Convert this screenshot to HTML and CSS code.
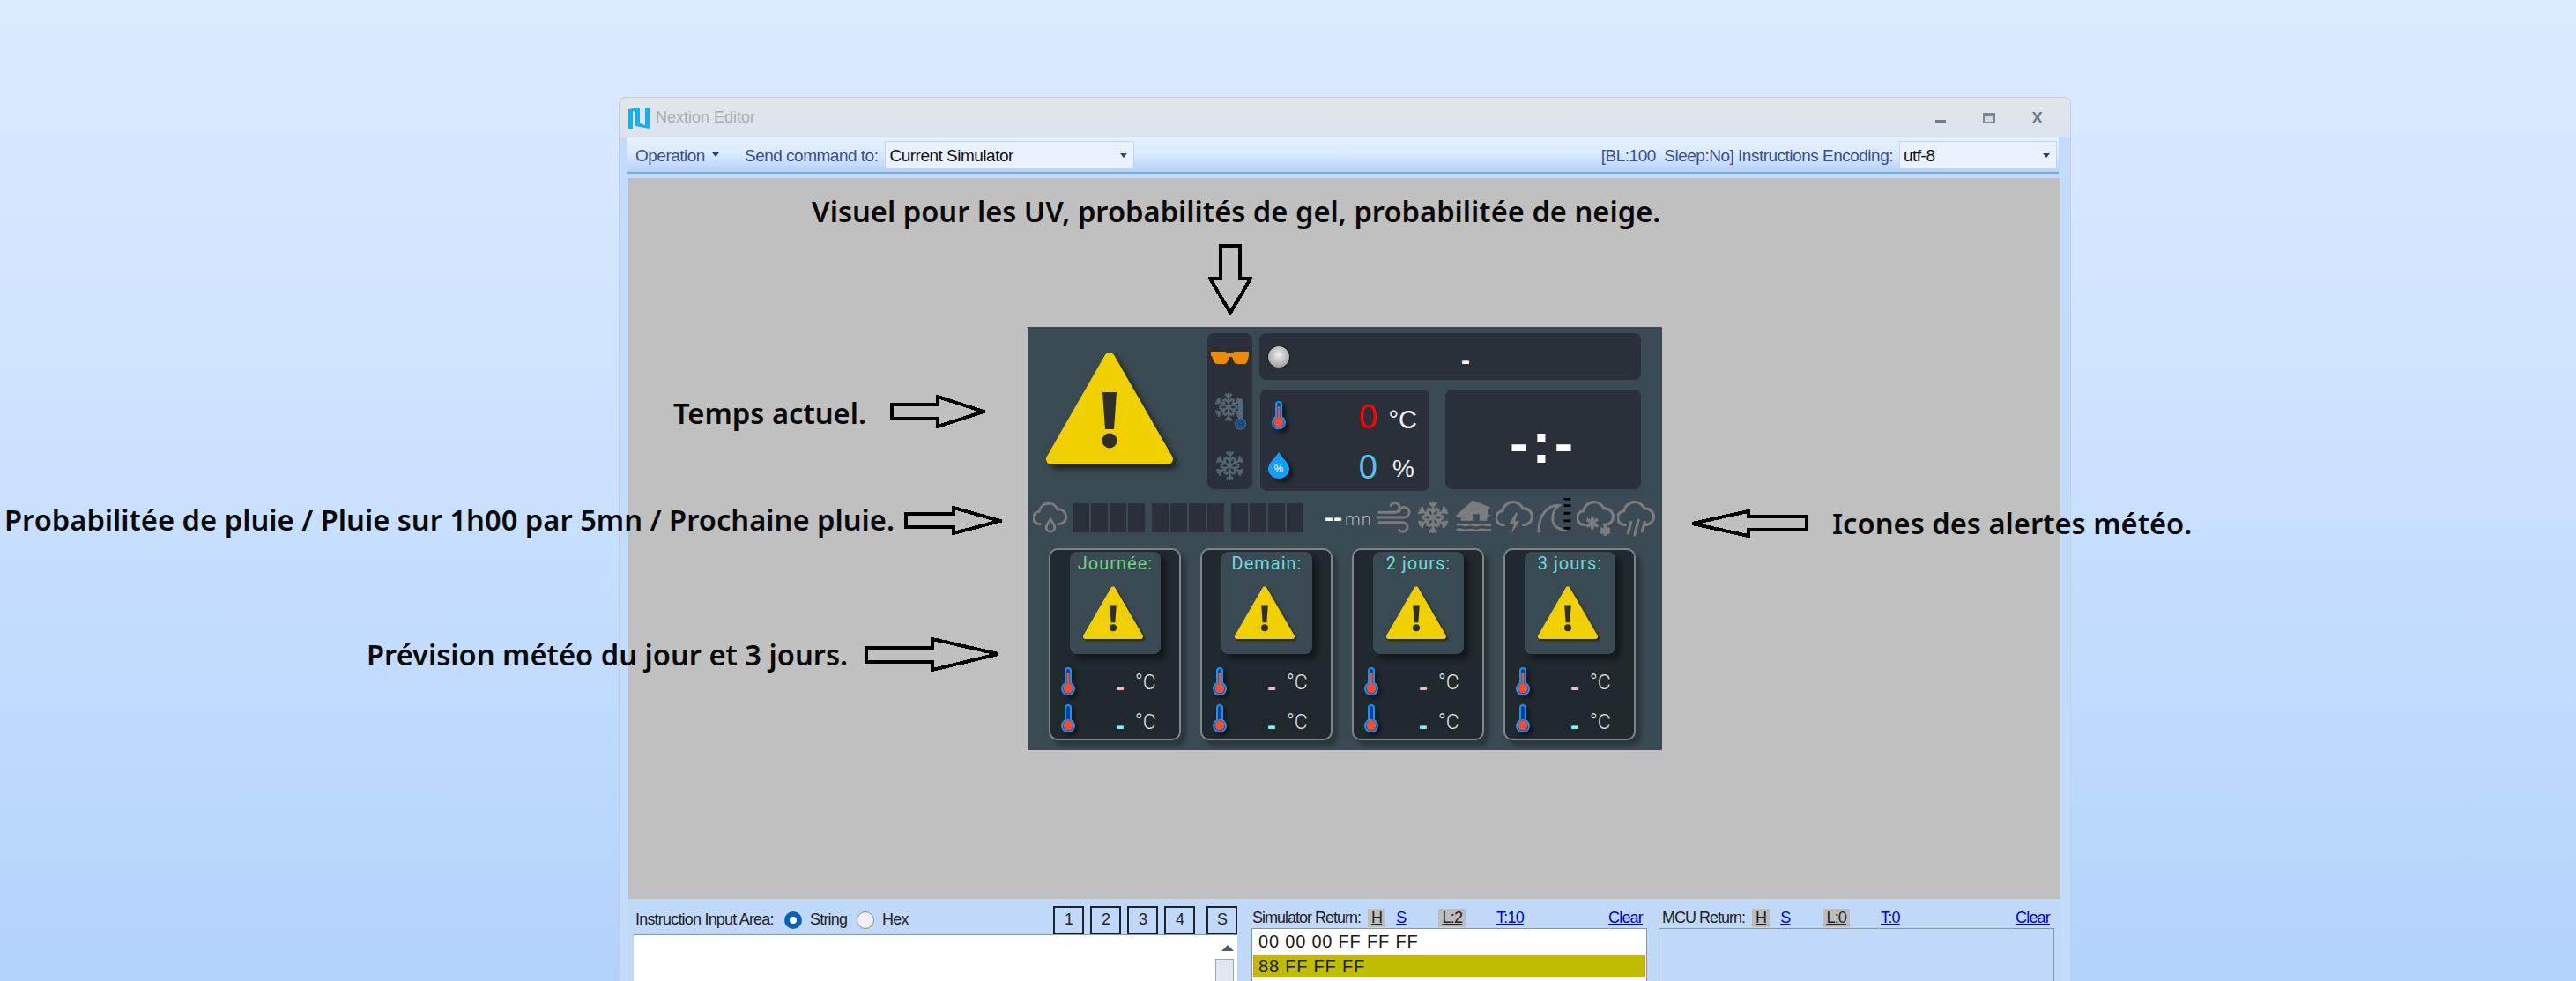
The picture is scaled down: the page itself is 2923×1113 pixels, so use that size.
FILE: index.html
```html
<!DOCTYPE html>
<html lang="en">
<head>
    <meta charset="UTF-8">
    <title>Nextion Editor</title>
    <link rel="stylesheet" href="styles.css">
</head>
<body>
    <!-- shared icons -->
    <svg class="defs" aria-hidden="true">
        <symbol id="warn" viewBox="0 0 144 128" preserveAspectRatio="none">
            <polygon points="72,7 6,122 138,122" fill="#f0d000" stroke="#f0d000" stroke-width="12" stroke-linejoin="round"/>
            <polygon points="64,46 80,46 77,88 67,88" fill="#2e2e2a"/>
            <circle cx="72" cy="101" r="8.5" fill="#2e2e2a"/>
        </symbol>
        <symbol id="therm-hi" viewBox="0 0 16 32">
            <path d="M5 18V4a3 3 0 0 1 6 0v14a7 7 0 1 1-6 0z" fill="#0b3f9c" stroke="#1296f0" stroke-width="2"/>
            <rect x="6.5" y="6" width="3" height="14" fill="#e8503c"/>
            <circle cx="8" cy="24" r="5.5" fill="#f04c36"/>
        </symbol>
        <symbol id="therm-lo" viewBox="0 0 16 32">
            <path d="M5 18V4a3 3 0 0 1 6 0v14a7 7 0 1 1-6 0z" fill="#0b3f9c" stroke="#1296f0" stroke-width="2"/>
            <rect x="6.5" y="17" width="3" height="4" fill="#e8503c"/>
            <circle cx="8" cy="24" r="5.5" fill="#f04c36"/>
        </symbol>
        <symbol id="flake" viewBox="0 0 36 36">
            <g id="flake-arm" fill="none" stroke="currentColor" stroke-width="2.6">
                <path d="M18 18V1M18 6l-4-4M18 6l4-4M18 12l-5-4M18 12l5-4"/>
            </g>
            <use href="#flake-arm" transform="rotate(60 18 18)"/>
            <use href="#flake-arm" transform="rotate(120 18 18)"/>
            <use href="#flake-arm" transform="rotate(180 18 18)"/>
            <use href="#flake-arm" transform="rotate(240 18 18)"/>
            <use href="#flake-arm" transform="rotate(300 18 18)"/>
        </symbol>
        <symbol id="cloud" viewBox="0 0 42 42">
            <path d="M9 29H8.500A7.500 7.500 0 0 1 7.500 14 A11.500 11.500 0 0 1 29.500 11.500A8.500 8.500 0 0 1 32 29H30" fill="none" stroke="#7b7d7d" stroke-width="3" stroke-linecap="round"/>
        </symbol>
    </svg>

    <div class="window">
        <div class="titlebar">
            <svg class="logo" viewBox="0 0 24 24">
                <path d="M0 2L13 0V18L19 20V0h5v24L8 21V5L5 4v20H0z" fill="#14b0f0"/>
            </svg>
            <span class="title">Nextion Editor</span>
            <span class="win-btn win-min"></span>
            <span class="win-btn win-max"></span>
            <span class="win-close">X</span>
        </div>

        <div class="toolbar">
            <span class="tool-text">Operation</span>
            <span class="caret op-caret"></span>
            <span class="tool-text send-label">Send command to:</span>
            <div class="combo combo-send"><span>Current Simulator</span><span class="caret"></span></div>
            <span class="tool-text status-text">[BL:100&nbsp; Sleep:No] Instructions Encoding:</span>
            <div class="combo combo-enc"><span>utf-8</span><span class="caret"></span></div>
        </div>

        <div class="canvas">
            <div class="hmi">
                <div class="hmi-top">
                    <svg class="big-warn"><use href="#warn"/></svg>
                    <div class="uv-col">
                        <svg class="uv-glasses" viewBox="0 0 43 15">
                            <path d="M0 1h16l4 2h3l4-2h16v5l-2 7q-1 2-3 2h-8q-3 0-4-3l-2-5h-3l-2 5q-1 3-4 3H7q-2 0-3-2L1 6H0z" fill="#f08a00"/>
                        </svg>
                        <svg class="uv-frost" viewBox="0 0 38 44">
                            <use href="#flake" x="0" y="0" width="34" height="36"/>
                            <rect x="28" y="8" width="5" height="26" rx="2.500" fill="#4b6c7e"/>
                            <circle cx="30.500" cy="37" r="6" fill="#1d4a7c" stroke="#4b6272" stroke-width="1.500"/>
                        </svg>
                        <svg class="uv-snow"><use href="#flake"/></svg>
                    </div>
                    <div class="top-right">
                        <div class="status-bar">
                            <span class="ball"></span>
                            <span class="status-dash">-</span>
                        </div>
                        <div class="lower">
                            <div class="temp-box">
                                <div class="temp-row">
                                    <svg class="temp-icon"><use href="#therm-hi"/></svg>
                                    <span class="big-val val-red">0</span>
                                    <span class="big-unit">°C</span>
                                </div>
                                <div class="temp-row">
                                    <svg class="temp-icon drop" viewBox="0 0 24 30">
                                        <path d="M12 0C8 7 0 12 0 19a12 11 0 0 0 24 0C24 12 16 7 12 0z" fill="#10a0f8"/>
                                        <text x="12" y="23" class="drop-text">%</text>
                                    </svg>
                                    <span class="big-val val-blue">0</span>
                                    <span class="big-unit unit-pct">%</span>
                                </div>
                            </div>
                            <div class="time-box">-:-</div>
                        </div>
                    </div>
                </div>

                <div class="hmi-strip">
                    <svg class="rain-icon" viewBox="0 0 42 42">
                        <use href="#cloud"/>
                        <path d="M21 23c-3 5-5 7-5 10a5 5 0 0 0 10 0c0-3-2-5-5-10z" fill="none" stroke="#7b7d7d" stroke-width="3"/>
                    </svg>
                    <div class="cells">
                        <i></i><i></i><i></i><i></i>
                    </div>
                    <div class="cells">
                        <i></i><i></i><i></i><i></i>
                    </div>
                    <div class="cells">
                        <i></i><i></i><i></i><i></i>
                    </div>
                    <span class="next-dash">--</span>
                    <span class="next-unit">mn</span>
                    <div class="alerts">
                        <svg class="alert" viewBox="0 0 46 46">
                            <path d="M6 17H25a5.500 5.500 0 1 0-5-8M4 23H36a6 6 0 1 0-6-7M6 29H34a5.500 5.500 0 1 1-4 9" fill="none" stroke="#7b7d7d" stroke-width="3" stroke-linecap="round"/>
                        </svg>
                        <svg class="alert flake-alert" viewBox="0 0 46 46"><use href="#flake" x="2" y="3" width="40" height="40"/></svg>
                        <svg class="alert" viewBox="0 0 46 46">
                            <path d="M1 21L21 3l21 8-3 4v4l4 2-5 1v5H29v-8h-8v8H7v-4H2z" fill="#7b7d7d"/>
                            <path d="M2 32c5-3 8 2 13 0s8 2 13 0 8 1 15 0M2 38c5-3 8 2 13 0s8 2 13 0 8 1 15 0" fill="none" stroke="#7b7d7d" stroke-width="2.500"/>
                        </svg>
                        <svg class="alert" viewBox="0 0 42 42">
                            <use href="#cloud"/>
                            <path d="M22 16l-7 12h5l-3 11 9-14h-5l3-9z" fill="#7b7d7d"/>
                        </svg>
                        <svg class="alert" viewBox="0 0 46 46">
                            <path d="M3 40C3 20 14 8 27 9 18 15 17 30 25 35c3 2 6 3 10 3" fill="none" stroke="#7b7d7d" stroke-width="3" stroke-linecap="round"/>
                            <path d="M33 1h8M33 9h8M33 18h8M33 27h8M33 36h8" stroke="#000" stroke-width="3"/>
                        </svg>
                        <svg class="alert" viewBox="0 0 42 42">
                            <use href="#cloud"/>
                            <path d="M17 20v14M11 23l12 8M23 23l-12 8M31 30v11M26 33l10 5M36 33l-10 5" stroke="#7b7d7d" stroke-width="3.500"/>
                        </svg>
                        <svg class="alert" viewBox="0 0 42 42">
                            <use href="#cloud"/>
                            <path d="M15 26l-3 12M23 24l-4 16M30 26l-3 10" stroke="#7b7d7d" stroke-width="3" stroke-linecap="round"/>
                        </svg>
                    </div>
                </div>

                <div class="cards">
                    <div class="card">
                        <div class="tile">
                            <div class="tile-label label-green">Journée:</div>
                            <svg class="small-warn"><use href="#warn"/></svg>
                        </div>
                        <div class="fc-row">
                            <svg class="fc-therm"><use href="#therm-hi"/></svg>
                            <span class="fc-val val-pink">-</span>
                            <span class="fc-unit">°C</span>
                        </div>
                        <div class="fc-row">
                            <svg class="fc-therm"><use href="#therm-lo"/></svg>
                            <span class="fc-val val-cyan">-</span>
                            <span class="fc-unit unit-low">°C</span>
                        </div>
                    </div>
                    <div class="card">
                        <div class="tile">
                            <div class="tile-label">Demain:</div>
                            <svg class="small-warn"><use href="#warn"/></svg>
                        </div>
                        <div class="fc-row">
                            <svg class="fc-therm"><use href="#therm-hi"/></svg>
                            <span class="fc-val val-pink">-</span>
                            <span class="fc-unit">°C</span>
                        </div>
                        <div class="fc-row">
                            <svg class="fc-therm"><use href="#therm-lo"/></svg>
                            <span class="fc-val val-cyan">-</span>
                            <span class="fc-unit unit-low">°C</span>
                        </div>
                    </div>
                    <div class="card">
                        <div class="tile">
                            <div class="tile-label">2 jours:</div>
                            <svg class="small-warn"><use href="#warn"/></svg>
                        </div>
                        <div class="fc-row">
                            <svg class="fc-therm"><use href="#therm-hi"/></svg>
                            <span class="fc-val val-pink">-</span>
                            <span class="fc-unit">°C</span>
                        </div>
                        <div class="fc-row">
                            <svg class="fc-therm"><use href="#therm-lo"/></svg>
                            <span class="fc-val val-cyan">-</span>
                            <span class="fc-unit unit-low">°C</span>
                        </div>
                    </div>
                    <div class="card">
                        <div class="tile">
                            <div class="tile-label">3 jours:</div>
                            <svg class="small-warn"><use href="#warn"/></svg>
                        </div>
                        <div class="fc-row">
                            <svg class="fc-therm"><use href="#therm-hi"/></svg>
                            <span class="fc-val val-pink">-</span>
                            <span class="fc-unit">°C</span>
                        </div>
                        <div class="fc-row">
                            <svg class="fc-therm"><use href="#therm-lo"/></svg>
                            <span class="fc-val val-cyan">-</span>
                            <span class="fc-unit unit-low">°C</span>
                        </div>
                    </div>
                </div>
            </div>
        </div>

        <div class="panel">
            <div class="input-col">
                <div class="input-head">
                    <span class="input-label">Instruction Input Area:</span>
                    <span class="radio radio-on"></span>
                    <span class="radio-text">String</span>
                    <span class="radio"></span>
                    <span class="radio-text">Hex</span>
                    <span class="slot slot-first">1</span>
                    <span class="slot">2</span>
                    <span class="slot">3</span>
                    <span class="slot">4</span>
                    <span class="slot slot-s">S</span>
                </div>
                <div class="input-box">
                    <div class="scroll">
                        <span class="scroll-up"></span>
                        <span class="scroll-thumb"></span>
                    </div>
                </div>
            </div>
            <div class="return-col">
                <div class="return-head">
                    <span class="ret-label">Simulator Return:</span>
                    <span class="chip chip-h">H</span>
                    <a class="link link-s">S</a>
                    <span class="chip chip-l">L:2</span>
                    <a class="link link-t">T:10</a>
                    <a class="link link-clear">Clear</a>
                </div>
                <div class="return-list">
                    <div class="ret-row">00 00 00 FF FF FF</div>
                    <div class="ret-row ret-active">88 FF FF FF</div>
                </div>
            </div>
            <div class="return-col mcu-col">
                <div class="return-head">
                    <span class="ret-label">MCU Return:</span>
                    <span class="chip chip-h">H</span>
                    <a class="link link-s">S</a>
                    <span class="chip chip-l">L:0</span>
                    <a class="link link-t">T:0</a>
                    <a class="link link-clear">Clear</a>
                </div>
                <div class="return-list mcu-list"></div>
            </div>
        </div>
    </div>

    <!-- notes written over the screenshot -->
    <div class="note note-uv">Visuel pour les UV, probabilités de gel, probabilitée de neige.</div>
    <svg class="arrow arrow-uv" viewBox="0 0 50 80"><polygon points="14,2 36,2 36,39 48,39 25,78 2,39 14,39"/></svg>
    <div class="note note-now">Temps actuel.</div>
    <svg class="arrow arrow-now" viewBox="0 0 108 38"><polygon points="2,11 54,11 54,2 106,19 54,36 54,27 2,27"/></svg>
    <div class="note note-rain">Probabilitée de pluie / Pluie sur 1h00 par 5mn / Prochaine pluie.</div>
    <svg class="arrow arrow-rain" viewBox="0 0 111 33"><polygon points="2,9 56,9 56,2 109,17 56,31 56,24 2,24"/></svg>
    <div class="note note-fc">Prévision météo du jour et 3 jours.</div>
    <svg class="arrow arrow-fc" viewBox="0 0 154 39"><polygon points="2,12 77,12 77,2 152,19 77,37 77,28 2,28"/></svg>
    <svg class="arrow arrow-alert" viewBox="0 0 134 32"><polygon points="132,8 66,8 66,2 2,16 66,30 66,23 132,23"/></svg>
    <div class="note note-alert">Icones des alertes météo.</div>
</body>
</html>
```

FILE: styles.css
```css
html, body {
    margin: 0;
    height: 100%;
}

body {
    position: relative;
    height: 1113px;
    overflow: hidden;
    box-sizing: border-box;
    padding: 110px 0 0 702px;
    background: linear-gradient(180deg, #dceaff 0%, #cfe3ff 39%, #c0dbfe 70%, #b3d2fb 100%);
    font-family: "Liberation Sans", Arial, sans-serif;
}

.defs {
    position: absolute;
    width: 0;
    height: 0;
}

/* Window frame */
.window {
    width: 1648px;
    height: 1003px;
    box-sizing: border-box;
    border: 1px solid #c6ced8;
    border-bottom: 0;
    border-radius: 7px 7px 0 0;
    background: #c3dcfd;
}

.titlebar {
    display: flex;
    align-items: center;
    height: 45px;
    padding-left: 10px;
    background: linear-gradient(180deg, #e0e6e9 0%, #dfe5e9 45%, #dbe3ee 100%);
    border-radius: 6px 6px 0 0;
}

.logo {
    width: 24px;
    height: 24px;
}

.title {
    margin-left: 7px;
    font-size: 18px;
    color: #a9aeb3;
}

.win-btn {
    display: block;
    box-sizing: border-box;
}

.win-min {
    width: 12px;
    height: 4px;
    margin: 8px 0 0 auto;
    background: #6f7c8c;
}

.win-max {
    width: 14px;
    height: 12px;
    margin-left: 42px;
    border: 2px solid #7c8898;
    border-top-width: 4px;
    background: #d4dbe5;
}

.win-close {
    margin: 0 31px 0 41px;
    font-size: 19px;
    font-weight: bold;
    color: #6f7c8c;
}

.toolbar {
    display: flex;
    align-items: center;
    height: 39px;
    margin: 0 13px 0 9px;
    padding-left: 9px;
    background: linear-gradient(180deg, #e4f0ff 0%, #dcebfe 45%, #b5d1f9 100%);
    border-bottom: 2px solid #7ba7e6;
    font-size: 19px;
    color: #3a4f8c;
}

.tool-text {
    margin-top: 3px;
    letter-spacing: -0.5px;
    white-space: pre;
}

.caret {
    display: inline-block;
    width: 0;
    height: 0;
    border-left: 4px solid transparent;
    border-right: 4px solid transparent;
    border-top: 5px solid #2b3f70;
}

.op-caret {
    margin-left: 8px;
}

.send-label {
    margin-left: 29px;
}

.combo {
    display: flex;
    align-items: center;
    justify-content: space-between;
    flex: none;
    box-sizing: border-box;
    height: 32px;
    padding: 2px 7px 0 4px;
    background: #e9f2fe;
    border: 1px solid #c6d6ea;
    font-size: 19px;
    letter-spacing: -0.5px;
    color: #111;
}

.combo-send {
    width: 283px;
    margin-left: 8px;
}

.status-text {
    margin-left: auto;
}

.combo-enc {
    width: 179px;
    margin: 0 2px 0 7px;
}

/* Grey simulator area */
.canvas {
    height: 818px;
    margin: 5px 11px 0 10px;
    padding-top: 169px;
    box-sizing: border-box;
    background: #c0c0c0;
}

.hmi {
    width: 720px;
    height: 480px;
    margin-left: 453px;
    padding-top: 7px;
    box-sizing: border-box;
    background: #3a4a53;
}

.hmi-top {
    display: flex;
    height: 179px;
    padding-left: 21px;
}

.big-warn {
    flex: none;
    width: 144px;
    height: 128px;
    margin: 21px 39px 0 0;
    filter: drop-shadow(5px 5px 3px #1b2328);
}

.uv-col {
    display: flex;
    flex-direction: column;
    align-items: center;
    flex: none;
    width: 51px;
    height: 177px;
    padding-top: 20px;
    box-sizing: border-box;
    border-radius: 8px;
    background: #2a303a;
    color: #56656f;
}

.uv-glasses {
    width: 43px;
    height: 15px;
}

.uv-frost {
    width: 38px;
    height: 44px;
    margin-top: 31px;
}

.uv-snow {
    width: 35px;
    height: 35px;
    margin-top: 23px;
}

.top-right {
    display: flex;
    flex-direction: column;
    gap: 11px;
    width: 433px;
    margin-left: 8px;
}

.status-bar {
    display: flex;
    align-items: center;
    height: 53px;
    padding-left: 10px;
    box-sizing: border-box;
    border-radius: 8px;
    background: #2a303a;
}

.ball {
    width: 24px;
    height: 24px;
    border-radius: 50%;
    background: radial-gradient(circle at 50% 40%, #f0f0f0 0%, #b0b0b0 60%, #888 100%);
    box-shadow: 0 0 0 1px #15181c;
}

.status-dash {
    margin: 8px 0 0 195px;
    font-size: 30px;
    font-weight: bold;
    line-height: 1;
    color: #fff;
}

.lower {
    display: flex;
}

.temp-box {
    width: 192px;
    height: 115px;
    margin-left: 1px;
    padding: 0 14px 0 9px;
    box-sizing: border-box;
    border-radius: 8px;
    background: #2a303a;
}

.temp-row {
    display: flex;
    align-items: center;
    height: 57px;
}

.temp-icon {
    width: 24px;
    height: 32px;
    filter: drop-shadow(4px 4px 2px #12161a);
}

.drop-text {
    font-family: "Liberation Sans", Arial, sans-serif;
    font-size: 12px;
    font-weight: bold;
    text-anchor: middle;
    fill: #cfe8ff;
}

.big-val {
    margin: 5px 0 0 auto;
    font-size: 38px;
    line-height: 1;
}

.val-red {
    color: #f00;
}

.val-blue {
    color: #5cc0f0;
}

.big-unit {
    width: 33px;
    margin: 11px 0 0 12px;
    font-size: 29px;
    line-height: 1;
    text-align: right;
    color: #f2f2f2;
    white-space: nowrap;
}

.unit-pct {
    width: 36px;
    margin: 9px 0 0 9px;
    padding-right: 3px;
    box-sizing: border-box;
    font-size: 28px;
}

.time-box {
    display: flex;
    align-items: center;
    justify-content: center;
    width: 222px;
    height: 113px;
    padding-top: 8px;
    box-sizing: border-box;
    margin-left: 18px;
    border-radius: 8px;
    background: #2a303a;
    font-size: 64px;
    font-weight: bold;
    letter-spacing: 4px;
    color: #fff;
}

/* Rain strip and alert icons */
.hmi-strip {
    display: flex;
    align-items: center;
    height: 44px;
    margin-top: 8px;
    padding-left: 6px;
}

.rain-icon {
    flex: none;
    width: 40px;
    height: 40px;
    margin-right: 5px;
    background: #3c4a56;
}

.cells {
    display: flex;
    gap: 2px;
    margin-right: 8px;
}

.cells i {
    display: block;
    width: 19px;
    height: 33px;
    background: #2a303a;
}

.next-dash {
    margin-left: 16px;
    font-size: 30px;
    font-weight: bold;
    line-height: 1;
    color: #f4f4f4;
}

.next-unit {
    margin: 4px 0 0 3px;
    font-family: Roboto, sans-serif;
    font-size: 20px;
    font-weight: 300;
    letter-spacing: 1px;
    color: #b3b7ba;
}

.alerts {
    display: flex;
    flex: none;
    margin-left: auto;
    margin-right: 6px;
    background: #3c4a56;
}

.alert {
    width: 46px;
    height: 44px;
}

.flake-alert {
    color: #7b7d7d;
}

/* Forecast cards */
.cards {
    display: flex;
    gap: 22px;
    margin-top: 13px;
    padding-left: 24px;
}

.card {
    width: 150px;
    height: 218px;
    box-sizing: border-box;
    border: 2px solid #7f8588;
    border-radius: 10px;
    background: #20292e;
    box-shadow: 6px 6px 4px #2b363d;
}

.tile {
    width: 103px;
    height: 116px;
    margin: 2px 0 0 22px;
    border-radius: 8px;
    background: #3a4a53;
    box-shadow: 6px 6px 5px #14191d;
    overflow: hidden;
}

.tile-label {
    margin-top: 3px;
    font-family: Roboto, sans-serif;
    font-size: 20px;
    letter-spacing: 1px;
    line-height: 20px;
    text-align: center;
    white-space: nowrap;
    color: #6fdcdc;
}

.label-green {
    color: #72d57f;
}

.small-warn {
    display: block;
    width: 68px;
    height: 60px;
    margin: 16px 0 0 15px;
    filter: drop-shadow(2px 2px 1px #1b2328);
}

.fc-row {
    display: flex;
    align-items: center;
    height: 42px;
    padding: 0 27px 0 11px;
    box-sizing: border-box;
}

.tile + .fc-row {
    margin-top: 10px;
}

.fc-therm {
    width: 16px;
    height: 32px;
    margin-left: 1px;
    filter: drop-shadow(3px 3px 2px #0e1215);
}

.fc-val {
    margin-left: auto;
    font-size: 30px;
    font-weight: bold;
    line-height: 1;
}

.val-pink {
    margin-top: 12px;
    color: #f5b8c8;
}

.val-cyan {
    margin-top: 15px;
    color: #80f4f4;
}

.fc-unit {
    width: 23px;
    margin: 3px 0 0 12px;
    font-family: Roboto, sans-serif;
    font-size: 23px;
    font-weight: 300;
    line-height: 1;
    white-space: nowrap;
    color: #e4e6e6;
}

.unit-low {
    margin-top: 8px;
}

/* Lower panel */
.panel {
    display: flex;
    margin: 0 11px 0 10px;
    padding: 7px 0 0 6px;
    height: 93px;
    box-sizing: border-box;
    background: #c1d9f8;
    font-size: 18px;
    letter-spacing: -0.8px;
    color: #222;
}

.input-col {
    flex: none;
    width: 685px;
}

.input-head {
    display: flex;
    align-items: center;
    height: 33px;
}

.input-label {
    flex: none;
    width: 171px;
    padding-left: 2px;
    box-sizing: border-box;
    white-space: nowrap;
}

.radio {
    flex: none;
    width: 20px;
    height: 20px;
    box-sizing: border-box;
    border: 1px solid #8a8a8a;
    border-radius: 50%;
    background: #f0f0f0;
}

.radio-on {
    border: 6px solid #0a62b8;
    background: #fff;
}

.radio-text {
    width: 62px;
    padding-left: 9px;
    box-sizing: border-box;
}

.slot {
    display: flex;
    align-items: center;
    justify-content: center;
    width: 35px;
    height: 32px;
    margin-left: 7px;
    box-sizing: border-box;
    border: 2px solid #1c2430;
}

.slot-first {
    margin-left: auto;
}

.slot-s {
    margin-left: 13px;
}

.input-box {
    display: flex;
    justify-content: flex-end;
    height: 60px;
    background: #fff;
    border-top: 1px solid #8d939a;
    overflow: hidden;
}

.scroll {
    width: 25px;
    padding-top: 11px;
    box-sizing: border-box;
}

.scroll-up {
    display: block;
    width: 0;
    height: 0;
    margin-left: 7px;
    border-left: 7px solid transparent;
    border-right: 7px solid transparent;
    border-bottom: 7px solid #4a5a78;
}

.scroll-thumb {
    display: block;
    width: 21px;
    height: 60px;
    margin-top: 9px;
    border: 1px solid #9aa6b4;
    box-sizing: border-box;
    background: #e2e8f0;
}

.return-col {
    flex: none;
    width: 449px;
    margin-left: 16px;
}

.mcu-col {
    margin-left: 13px;
}

.return-head {
    display: flex;
    align-items: center;
    height: 26px;
    padding: 3px 5px 0 1px;
    box-sizing: border-box;
}

.mcu-col .return-head {
    padding-left: 4px;
}

.ret-label {
    letter-spacing: -1px;
}

.chip {
    padding: 0 4px;
    line-height: 21px;
    background: #bdbdbd;
    text-decoration: underline;
}

.chip-h {
    margin-left: 8px;
}

.chip-l {
    margin-left: 37px;
}

.link {
    color: #0000e0;
    text-decoration: underline;
}

.link-s {
    margin-left: 12px;
}

.link-t {
    margin-left: 35px;
}

.link-clear {
    margin-left: auto;
}

.return-list {
    height: 60px;
    background: #fff;
    border: 1px solid #8d939a;
    font-size: 20px;
    letter-spacing: 0.8px;
    color: #1a1a1a;
}

.mcu-list {
    background: #c1d9f8;
}

.ret-row {
    height: 29px;
    padding-left: 7px;
    line-height: 29px;
}

.ret-active {
    height: 26px;
    margin: 0 1px;
    padding-left: 5px;
    line-height: 24px;
    box-sizing: border-box;
    background: #c0bc00;
    border: 1px solid #f08a20;
}

/* Notes over the screenshot */
.note {
    position: absolute;
    font-family: "Noto Sans", sans-serif;
    font-size: 32.7px;
    font-weight: 600;
    line-height: 40px;
    white-space: nowrap;
    color: #0a0a0a;
}

.note-uv { left: 921px; top: 220px; }
.note-now { left: 764px; top: 449px; }
.note-rain { left: 5px; top: 570px; }
.note-fc { left: 416px; top: 723px; }
.note-alert { left: 2079px; top: 574px; }

.arrow {
    position: absolute;
    fill: none;
    stroke: #000;
    stroke-width: 4;
    shape-rendering: crispEdges;
}

.arrow-uv { left: 1371px; top: 277px; width: 50px; height: 80px; }
.arrow-now { left: 1010px; top: 448px; width: 108px; height: 38px; }
.arrow-rain { left: 1026px; top: 574px; width: 111px; height: 33px; }
.arrow-fc { left: 981px; top: 723px; width: 154px; height: 39px; }
.arrow-alert { left: 1918px; top: 578px; width: 134px; height: 32px; }
```
